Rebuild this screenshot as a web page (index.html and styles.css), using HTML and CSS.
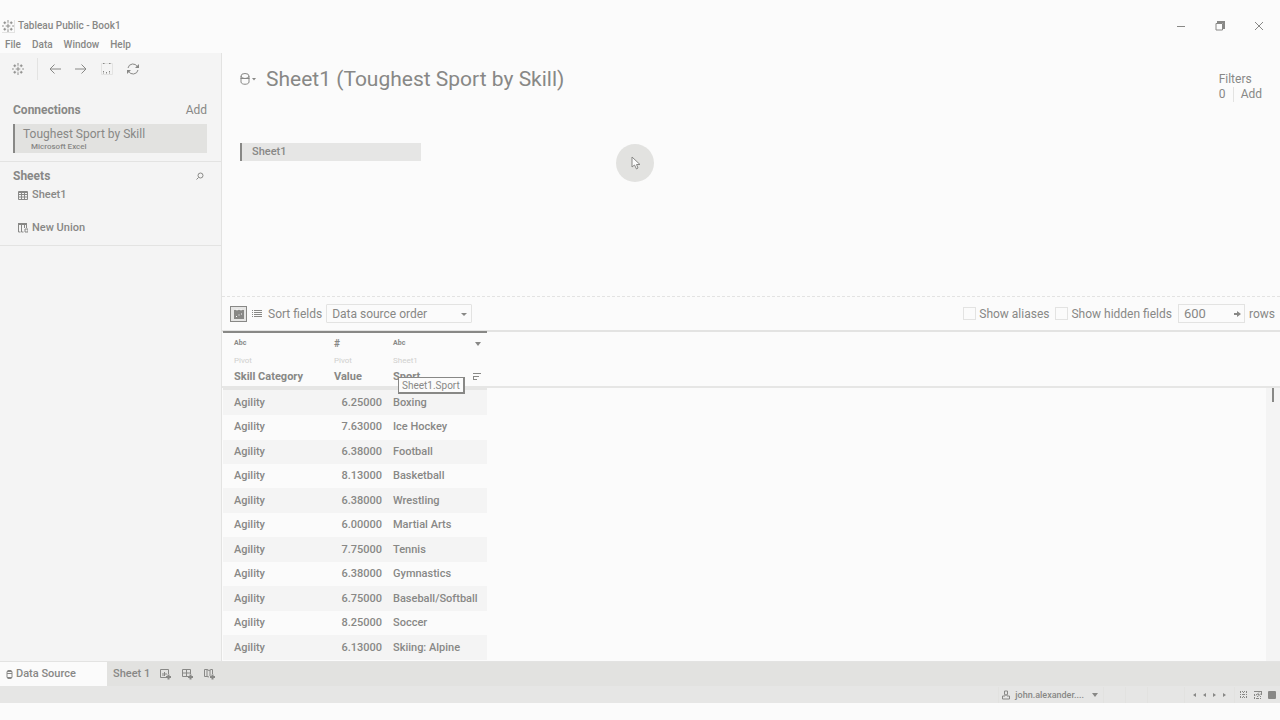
FILE: index.html
```html
<!DOCTYPE html>
<html lang="en">
<head>
<meta charset="utf-8">
<meta name="viewport" content="width=device-width, initial-scale=1">
<title>Tableau Public - Book1</title>
<link rel="stylesheet" href="styles.css">
</head>
<body>
<div class="app">
  <header class="titlebar">
    <div class="app-title">
      <svg class="logo framed" viewBox="0 0 13 13" width="13" height="13"><path d="M6.500 4v5M4 6.500h5M6.500 0v3M6.500 10v3M1.500 3h3M3 1.500v3M8.500 3h3M10 1.500v3M1.500 10h3M3 8.500v3M8.500 10h3M10 8.500v3M0 6.500h2M11 6.500h2"/></svg>
      <h1>Tableau Public - Book1</h1>
    </div>
    <div class="window-buttons">
      <button aria-label="Minimize"><svg viewBox="0 0 10 10" width="10" height="10"><path d="M1 5.500h8"/></svg></button>
      <button aria-label="Restore"><svg viewBox="0 0 10 10" width="10" height="10"><path d="M1 2.500h6.500V9H1z"/><path d="M2 1h7v7" stroke-width="2"/></svg></button>
      <button aria-label="Close"><svg viewBox="0 0 10 10" width="10" height="10"><path d="M1 1l8 8M9 1L1 9"/></svg></button>
    </div>
  </header>
  <nav class="menu">
    <button>File</button><button>Data</button><button>Window</button><button>Help</button>
  </nav>

  <div class="body">
    <aside class="sidebar">
      <div class="toolbar">
        <button aria-label="Start page" class="home"><svg viewBox="0 0 13 13" width="12" height="12"><path d="M6.500 4v5M4 6.500h5M6.500 0v3M6.500 10v3M1.500 3h3M3 1.500v3M8.500 3h3M10 1.500v3M1.500 10h3M3 8.500v3M8.500 10h3M10 8.500v3M0 6.500h2M11 6.500h2"/></svg></button>
        <button aria-label="Undo"><svg viewBox="0 0 12 12" width="12" height="12"><path d="M12 6H1M5.500 1.500L1 6l4.500 4.500"/></svg></button>
        <button aria-label="Redo"><svg viewBox="0 0 12 12" width="12" height="12"><path d="M0 6h11M6.500 1.500L11 6l-4.500 4.500"/></svg></button>
        <button aria-label="Save"><svg viewBox="0 0 12 12" width="12" height="12"><path class="faint" d="M.5.500h11v11H.5z"/><path d="M2 .5h2M8 .5h2M2.500 8v3M5.500 9v2M8.500 8v3" stroke-dasharray="1.500 1"/></svg></button>
        <button aria-label="Refresh"><svg viewBox="0 0 12 12" width="12" height="12"><path d="M1 5a5 5 0 0 1 9.500-1M11 7a5 5 0 0 1-9.500 1"/><path class="solid" d="M12 1v4H8zM0 11V7h4z"/></svg></button>
      </div>
      <section class="connections">
        <div class="side-head"><h2>Connections</h2><button>Add</button></div>
        <button class="connection"><span class="conn-name">Toughest Sport by Skill</span><span class="conn-type">Microsoft Excel</span></button>
      </section>
      <section class="sheets">
        <div class="side-head"><h2>Sheets</h2><button aria-label="Search sheets"><svg viewBox="0 0 8 8" width="8" height="8"><circle cx="4.500" cy="3.500" r="2.500"/><path d="M2.500 5.500L.5 7.500"/></svg></button></div>
        <button class="sheet-item"><svg viewBox="0 0 10 9" width="10" height="9"><path d="M.5.500h9v8h-9zM1 1.500h8M1 3.500h8M1 6h8M3.500 2v6M6.500 2v6"/></svg>Sheet1</button>
        <button class="sheet-item union"><svg viewBox="0 0 10 10" width="10" height="10"><path d="M.5 1v8h2M.5 1.500h8V5M3.500 1v8h2M6.500 1v4M7 6v3h3V6z"/><path d="M0 1h9" stroke-width="2"/></svg>New Union</button>
      </section>
    </aside>

    <main class="main">
      <section class="canvas">
        <div class="source-head">
          <button class="source-menu" aria-label="Data source menu"><svg viewBox="0 0 17 12" width="17" height="12"><ellipse cx="5" cy="3" rx="4" ry="2.500"/><path d="M.5 5.500h9M1 3v6c0 3 8 3 8 0V3"/><path class="solid" d="M12 5h4l-2 2.500z"/></svg></button>
          <h2>Sheet1 (Toughest Sport by Skill)</h2>
          <div class="filters"><span>Filters</span><div class="filter-row"><span class="filter-count">0</span><button>Add</button></div></div>
        </div>
        <button class="table-pill">Sheet1</button>
        <div class="pointer" aria-hidden="true"><svg viewBox="0 0 10 14" width="10" height="14"><path class="arrow" d="M1 1v10l2.500-2 2 4 1.500-1-1.500-3.500H9z"/></svg></div>
      </section>

      <section class="grid-bar">
        <button class="view on" aria-label="Preview data"><svg viewBox="0 0 10 10" width="10" height="10"><path class="solid" d="M0 1h10v9H0z"/><path class="light" d="M3 0v1.500M7 0v1.500M2 7.500h1M4.500 6h1M7 5h1"/></svg></button>
        <button class="view" aria-label="Manage metadata"><svg viewBox="0 0 10 8" width="10" height="8"><path d="M0 .5h1M2 .5h8M0 2.500h1M2 2.500h8M0 4.500h1M2 4.500h8M0 6.500h1M2 6.500h8"/></svg></button>
        <label for="sort">Sort fields</label>
        <div class="select-wrap"><select id="sort"><option>Data source order</option></select></div>
        <div class="bar-right">
          <label class="check"><input type="checkbox">Show aliases</label>
          <label class="check"><input type="checkbox">Show hidden fields</label>
          <div class="rows-box"><input id="rows" type="text" value="600"><svg viewBox="0 0 7 6" width="7" height="6"><path class="solid" d="M0 2h3V0l4 3-4 3V4H0z"/></svg></div>
          <label for="rows">rows</label>
        </div>
      </section>

      <section class="grid-area">
        <div class="head-rule"></div>
        <table class="data">
          <thead>
            <tr>
              <th class="c1"><span class="kind">Abc</span><span class="origin">Pivot</span><span>Skill Category</span></th>
              <th class="c2"><span class="kind hash">#</span><span class="origin">Pivot</span><span>Value</span></th>
              <th class="c3"><span class="kind">Abc<svg viewBox="0 0 6 4" width="6" height="4"><path class="solid" d="M0 0h6L3 4z"/></svg></span><span class="origin">Sheet1</span><span class="field">Sport<svg viewBox="0 0 8 9" width="8" height="9"><path d="M0 1.500h8M1 4.500h5M0 7.500h4M.5 4v4"/></svg></span><span class="tooltip" role="tooltip">Sheet1.Sport</span></th>
            </tr>
          </thead>
          <tbody>
            <tr><td>Agility</td><td class="num">6.25000</td><td>Boxing</td></tr>
            <tr><td>Agility</td><td class="num">7.63000</td><td>Ice Hockey</td></tr>
            <tr><td>Agility</td><td class="num">6.38000</td><td>Football</td></tr>
            <tr><td>Agility</td><td class="num">8.13000</td><td>Basketball</td></tr>
            <tr><td>Agility</td><td class="num">6.38000</td><td>Wrestling</td></tr>
            <tr><td>Agility</td><td class="num">6.00000</td><td>Martial Arts</td></tr>
            <tr><td>Agility</td><td class="num">7.75000</td><td>Tennis</td></tr>
            <tr><td>Agility</td><td class="num">6.38000</td><td>Gymnastics</td></tr>
            <tr><td>Agility</td><td class="num">6.75000</td><td>Baseball/Softball</td></tr>
            <tr><td>Agility</td><td class="num">8.25000</td><td>Soccer</td></tr>
            <tr><td>Agility</td><td class="num">6.13000</td><td>Skiing: Alpine</td></tr>
          </tbody>
        </table>
        <div class="scrollbar"><div class="thumb"></div></div>
      </section>
    </main>
  </div>

  <nav class="tabs">
    <button class="tab active"><svg viewBox="0 0 7 9" width="7" height="9"><path d="M1 1.500h5v6H1zM1.500.500h4M1 3.500h5M1.500 8.500h4"/></svg>Data Source</button>
    <button class="tab">Sheet 1</button>
    <button class="new" aria-label="New worksheet"><svg viewBox="0 0 12 12" width="12" height="12"><path d="M7 9.500H1.500v-8h8V6M4 5v3M5.500 4v4M7 5v2"/><path class="plus" d="M9.500 6.500v5M7 9h5"/></svg></button>
    <button class="new" aria-label="New dashboard"><svg viewBox="0 0 12 12" width="12" height="12"><path d="M7 8.500H1.500v-7h8V6M1 5h8M5.500 1v7"/><path class="plus" d="M9.500 6.500v5M7 9h5"/></svg></button>
    <button class="new" aria-label="New story"><svg viewBox="0 0 12 12" width="12" height="12"><path d="M6 9L4 8.500H1.500v-7H4l2 1 2-1h1.500V6M4 1v8M7 2v6"/><path class="plus" d="M9.500 6.500v5M7 9h5"/></svg></button>
  </nav>
  <footer class="status">
    <button class="user"><svg viewBox="0 0 8 10" width="8" height="10"><path d="M2.500 1h3v3.500h-1L5 6h2.500v3h-7V6H3l.5-1.500h-1z"/></svg>john.alexander....<svg viewBox="0 0 6 4" width="6" height="4"><path class="solid" d="M0 0h6L3 4z"/></svg></button>
    <span class="cell"></span><span class="cell"></span><span class="cell wide"></span>
    <div class="pager">
      <button aria-label="First"><svg viewBox="0 0 3 4" width="3" height="4"><path class="solid" d="M3 0v4L0 2z"/></svg></button>
      <button aria-label="Previous"><svg viewBox="0 0 3 4" width="3" height="4"><path class="solid" d="M3 0v4L0 2z"/></svg></button>
      <button aria-label="Next"><svg viewBox="0 0 3 4" width="3" height="4"><path class="solid" d="M0 0v4l3-2z"/></svg></button>
      <button aria-label="Last"><svg viewBox="0 0 3 4" width="3" height="4"><path class="solid" d="M0 0v4l3-2z"/></svg></button>
    </div>
    <div class="modes">
      <button aria-label="Show tabs"><svg viewBox="0 0 8 8" width="8" height="8"><path stroke-dasharray="1 1" d="M0 .5h8M0 3.500h8M0 6.500h8M.5 1v6M3.500 1v6M6.500 1v6"/></svg></button>
      <button aria-label="Show filmstrip"><svg viewBox="0 0 8 8" width="8" height="8"><path d="M0 .5h8M7.500 0v4M2 4.500l3-3M4 5.500l3-3"/><path stroke-dasharray="1 1" d="M0 3.500h5M0 7.500h8M.5 4v4M3.500 5v3M6.500 5v3"/></svg></button>
      <button aria-label="Show sheet sorter"><svg viewBox="0 0 8 8" width="8" height="8"><rect class="solid" width="8" height="8" rx="1"/></svg></button>
    </div>
  </footer>
</div>
</body>
</html>
```
FILE: styles.css
```css
:root {
  --ink: #888886;
  --paper: #fbfbfb;
  --panel: #f4f4f4;
  --fill: #e6e6e5;
  --tab: #e2e2e0;
  --rule: #e3e3e2;
}
* { box-sizing: border-box; }
body {
  margin: 0;
  background: var(--paper);
  color: var(--ink);
  font: 500 11px/16px Roboto, "Open Sans", sans-serif;
}
h1, h2 { margin: 0; font: inherit; }
button, select, input { font: inherit; color: inherit; margin: 0; }
button { padding: 0; border: 0; background: none; text-align: left; }
svg { display: block; flex: none; fill: none; stroke: currentColor; }
.solid { fill: currentColor; stroke: none; }
.faint { stroke: var(--rule); }
.light { stroke: var(--paper); }
.plus { stroke-width: 2; }

.app { min-height: 100vh; display: flex; flex-direction: column; padding: 16px 0 17px; }
.titlebar { display: flex; justify-content: space-between; align-items: center; height: 20px; padding: 0 16px 0 2px; }
.app-title { display: flex; align-items: center; gap: 3px; font-size: 10px; }
.app-title svg { border-right: 1px solid var(--rule); border-bottom: 1px solid var(--rule); }
.window-buttons { display: flex; gap: 29px; }
.menu { display: flex; gap: 11px; height: 17px; padding: 0 5px; font-size: 10px; line-height: 17px; }

.body { flex: 1; display: flex; min-height: 0; }
.sidebar { width: 222px; flex: none; background: var(--panel); border-right: 1px solid var(--rule); }
.toolbar { display: flex; align-items: center; height: 32px; padding-left: 12px; gap: 14px; }
.home { display: flex; align-items: center; width: 26px; height: 22px; margin-right: -3px; border-right: 1px solid var(--rule); }
.connections { padding: 17px 14px 8px 13px; border-bottom: 1px solid var(--rule); }
.side-head { display: flex; justify-content: space-between; align-items: center; font-size: 12px; }
.side-head h2 { font-weight: 700; }
.side-head button { font-weight: 400; }
.connection { display: block; width: 100%; height: 29px; margin-top: 6px; padding: 2px 8px; border-left: 2px solid var(--ink); background: var(--tab); }
.conn-name { display: block; font-size: 12px; font-weight: 400; line-height: 16px; }
.conn-type { display: block; padding-left: 8px; font-size: 8px; line-height: 10px; }
.sheets { height: 84px; padding: 6px 17px 0 13px; border-bottom: 1px solid var(--rule); }
.sheet-item { display: flex; align-items: center; gap: 4px; margin: 3px 0 0 5px; }
.sheet-item.union { margin-top: 17px; }

.main { flex: 1; min-width: 0; display: flex; flex-direction: column; }
.canvas { position: relative; height: 243px; padding: 10px 18px 0; }
.source-head { display: flex; align-items: center; height: 32px; }
.source-head h2 { margin-left: 9px; font-size: 21px; font-weight: 400; line-height: 24px; }
.filters { margin-left: auto; align-self: flex-start; padding-top: 8px; font-size: 12px; font-weight: 400; }
.filter-row { display: flex; line-height: 15px; }
.filter-count { width: 15px; margin-right: 7px; border-right: 1px solid var(--rule); }
.table-pill { display: block; width: 181px; height: 18px; margin-top: 48px; padding-left: 10px; border-left: 2px solid var(--ink); background: var(--fill); line-height: 18px; }
.pointer { position: absolute; left: 394px; top: 91px; width: 38px; height: 38px; padding: 12px 15px; border-radius: 50%; background: var(--tab); }
.arrow { fill: var(--paper); }

.grid-bar { display: flex; align-items: center; height: 36px; padding: 0 5px 0 8px; border-top: 1px dashed var(--rule); border-bottom: 2px solid var(--rule); font-size: 12px; font-weight: 400; }
.view { display: grid; place-items: center; width: 17px; height: 16px; margin-right: 1px; }
.view.on { border: 1px solid var(--ink); background: var(--fill); }
.grid-bar > label { margin: 0 4px 0 2px; }
.select-wrap { position: relative; width: 146px; }
.select-wrap::after { content: ""; position: absolute; right: 5px; top: 9px; border: 3px solid transparent; border-top-color: var(--ink); pointer-events: none; }
select { appearance: none; width: 100%; height: 19px; padding: 0 5px; border: 1px solid var(--rule); border-radius: 1px; background: var(--paper); }
.bar-right { display: flex; align-items: center; margin-left: auto; }
.check { display: flex; align-items: center; gap: 3px; margin-right: 6px; }
.check input { appearance: none; width: 13px; height: 13px; border: 1px solid var(--rule); }
.rows-box { display: flex; align-items: center; width: 67px; height: 19px; margin-right: 4px; padding-right: 3px; border: 1px solid var(--rule); }
.rows-box input { flex: 1; min-width: 0; padding: 0 5px; border: 0; outline: 0; background: none; font-size: 13px; }

.grid-area { position: relative; flex: 1; display: grid; grid-template-columns: 265px 1fr 14px; grid-template-rows: 57px 1fr; margin-top: -1px; }
.head-rule { grid-area: 1 / 1 / 2 / 4; border-bottom: 2px solid var(--fill); }
.data { grid-area: 1 / 1 / 3 / 2; table-layout: fixed; width: 264px; margin-left: 1px; height: 329px; border-collapse: collapse; }
.data th { position: relative; height: 57px; padding: 3px 6px 0 11px; border-top: 2px solid var(--ink); border-bottom: 2px solid var(--fill); text-align: left; vertical-align: top; font-weight: 700; line-height: 15px; }
.c1 { width: 100px; }
.c2 { width: 64px; }
.data th span { display: block; white-space: nowrap; }
.data th .kind, .data th .field { display: flex; align-items: center; justify-content: space-between; }
.data th .kind { font-size: 7px; }
.data th .hash { font-size: 10px; }
.data th .origin { margin: 2px 0 1px; font-size: 8px; font-weight: 400; color: #d0d0ce; }
.data td { padding: 0 5px 0 11px; line-height: 16px; white-space: nowrap; }
.data th.c3, .data td:last-child { padding-left: 6px; }
.data .num { text-align: right; padding-right: 5px; }
.data tbody tr:nth-child(odd) { background: var(--panel); }
.data th .tooltip { position: absolute; left: 11px; top: 44px; height: 17px; padding: 0 3px; border: 1px solid var(--ink); border-right-width: 2px; border-bottom-width: 2px; background: var(--paper); font-size: 10px; font-weight: 400; line-height: 15px; }
.scrollbar { grid-area: 2 / 3 / 3 / 4; background: var(--panel); }
.thumb { width: 2px; height: 14px; margin-left: 6px; background: var(--ink); }

.tabs { display: flex; height: 25px; background: var(--tab); border-top: 1px solid var(--rule); }
.tab { display: flex; align-items: center; gap: 3px; padding: 0 4px 0 6px; }
.tab.active { width: 107px; background: var(--paper); }
.new { display: grid; place-items: center; width: 22px; }
.status { display: flex; justify-content: flex-end; align-items: center; height: 17px; background: var(--fill); }
.user { display: flex; align-items: center; gap: 5px; height: 16px; padding: 0 5px 0 3px; border: solid var(--tab); border-width: 0 1px; font-size: 9px; }
.user svg:last-child { margin-left: 3px; }
.cell { width: 22px; height: 16px; border-right: 1px solid var(--tab); }
.cell.wide { width: 37px; }
.pager { display: flex; align-items: center; gap: 7px; height: 16px; padding: 0 8px; border-right: 1px solid var(--tab); }
.modes { display: flex; gap: 6px; padding: 0 4px 0 5px; }
```
